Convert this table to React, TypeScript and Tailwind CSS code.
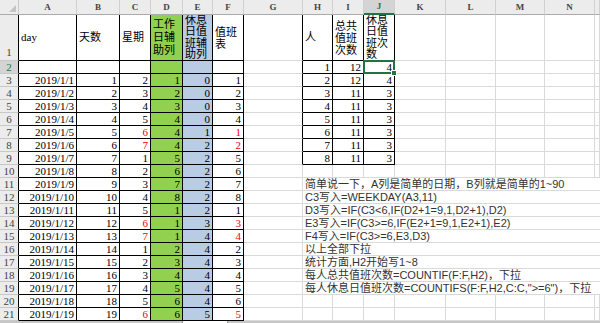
import React from 'react';

const COLS = ['A', 'B', 'C', 'D', 'E', 'F', 'G', 'H', 'I', 'J', 'K', 'L', 'M', 'N', 'O'];

// day, 天数, 星期, 工作日辅助列, 休息日值班辅助列, 值班表
const days: [string, number, number, number, number, number][] = [
  ['2019/1/1', 1, 2, 1, 0, 1],
  ['2019/1/2', 2, 3, 2, 0, 2],
  ['2019/1/3', 3, 4, 3, 0, 3],
  ['2019/1/4', 4, 5, 4, 0, 4],
  ['2019/1/5', 5, 6, 4, 1, 1],
  ['2019/1/6', 6, 7, 4, 2, 2],
  ['2019/1/7', 7, 1, 5, 2, 5],
  ['2019/1/8', 8, 2, 6, 2, 6],
  ['2019/1/9', 9, 3, 7, 2, 7],
  ['2019/1/10', 10, 4, 8, 2, 8],
  ['2019/1/11', 11, 5, 1, 2, 1],
  ['2019/1/12', 12, 6, 1, 3, 3],
  ['2019/1/13', 13, 7, 1, 4, 4],
  ['2019/1/14', 14, 1, 2, 4, 2],
  ['2019/1/15', 15, 2, 3, 4, 3],
  ['2019/1/16', 16, 3, 4, 4, 4],
  ['2019/1/17', 17, 4, 5, 4, 5],
  ['2019/1/18', 18, 5, 6, 4, 6],
  ['2019/1/19', 19, 6, 6, 5, 5],
];

const stats: [number, number, number][] = [
  [1, 12, 4],
  [2, 12, 4],
  [3, 11, 3],
  [4, 11, 3],
  [5, 11, 3],
  [6, 11, 3],
  [7, 11, 3],
  [8, 11, 3],
];

// rows 11..19, overflowing from column H
const notes = [
  '简单说一下，A列是简单的日期，B列就是简单的1~90',
  'C3写入=WEEKDAY(A3,11)',
  'D3写入=IF(C3<6,IF(D2+1=9,1,D2+1),D2)',
  'E3写入=IF(C3>=6,IF(E2+1=9,1,E2+1),E2)',
  'F4写入=IF(C3>=6,E3,D3)',
  '以上全部下拉',
  '统计方面,H2开始写1~8',
  '每人总共值班次数=COUNTIF(F:F,H2)，下拉',
  '每人休息日值班次数=COUNTIFS(F:F,H2,C:C,">=6")，下拉',
];

const gridCell = 'border-r border-b border-[#dadada]';
const blackCell = 'border-r border-b border-black';
const num = 'flex items-center justify-end pr-[2px]';

const RowHead: React.FC<{ n: number }> = ({ n }) => {
  const active = n === 2;
  return (
    <div
      className={`flex justify-center border-b border-b-[#c8c8c8] border-r border-r-black ${
        n === 1 ? 'items-end pb-[1px]' : 'items-center'
      } ${active ? 'bg-[#d4d4d4] text-[#217346]' : 'bg-[#ececec] text-[#444]'}`}
    >
      {n}
    </div>
  );
};

const App: React.FC = () => {
  const cells: React.ReactNode[] = [];

  // column header row
  cells.push(
    <div key="corner" className="flex items-end justify-end bg-[#ececec] border-r border-b border-r-[#c8c8c8] border-b-[#ababab] p-[2px]">
      <svg width="7" height="7" viewBox="0 0 7 7">
        <polygon points="7,0 7,7 0,7" fill="#c4c4c4" />
      </svg>
    </div>
  );
  COLS.forEach((c) => {
    const sel = c === 'J';
    cells.push(
      <div
        key={`h-${c}`}
        className={`flex items-center justify-center text-[9px] font-bold border-r border-r-[#d0d0d0] ${
          sel ? 'bg-[#d4d4d4] text-[#217346] border-b-2 border-b-[#217346]' : 'bg-[#ececec] text-[#444] border-b border-b-[#ababab]'
        }`}
      >
        {c === 'O' ? '' : c}
      </div>
    );
  });

  // row 1: titles
  cells.push(<RowHead key="r1" n={1} />);
  cells.push(<div key="A1" className={`${blackCell} flex items-center pl-[2px]`}>day</div>);
  cells.push(<div key="B1" className={`${blackCell} flex items-center pl-[2px]`}>天数</div>);
  cells.push(<div key="C1" className={`${blackCell} flex items-center pl-[2px]`}>星期</div>);
  cells.push(
    <div key="D1" className={`${blackCell} bg-[#92d050] flex items-center pl-[2px] leading-[13px] overflow-hidden`}>
      工作日辅助列
    </div>
  );
  cells.push(
    <div key="E1" className={`${blackCell} bg-[#b8cce4] flex items-center pl-[2px] leading-[11.5px] overflow-hidden`}>
      休息日值班辅助列
    </div>
  );
  cells.push(
    <div key="F1" className={`${blackCell} flex items-center pl-[2px] leading-[12px] overflow-hidden`}>
      值班表
    </div>
  );
  cells.push(<div key="G1" className="border-r border-b border-r-black border-b-[#dadada]" />);
  cells.push(<div key="H1" className={`${blackCell} flex items-center pl-[2px]`}>人</div>);
  cells.push(
    <div key="I1" className={`${blackCell} flex items-center pl-[2px] leading-[12px] overflow-hidden`}>
      总共值班次数
    </div>
  );
  cells.push(
    <div key="J1" className={`${blackCell} flex items-center pl-[2px] leading-[11.5px] overflow-hidden`}>
      休息日值班次数
    </div>
  );
  ['K', 'L', 'M', 'N', 'O'].forEach((c) => cells.push(<div key={`${c}1`} className={gridCell} />));

  // rows 2..21
  for (let r = 2; r <= 21; r++) {
    const d = r >= 3 ? days[r - 3] : null;
    const s = r <= 9 ? stats[r - 2] : null;
    const red = d && d[2] >= 6;
    cells.push(<RowHead key={`r${r}`} n={r} />);
    cells.push(<div key={`A${r}`} className={`${blackCell} ${num}`}>{d?.[0]}</div>);
    cells.push(<div key={`B${r}`} className={`${blackCell} ${num}`}>{d?.[1]}</div>);
    cells.push(
      <div key={`C${r}`} className={`${blackCell} ${num} ${red ? 'text-[#ff0000]' : ''}`}>
        {d?.[2]}
      </div>
    );
    cells.push(<div key={`D${r}`} className={`${blackCell} ${num} bg-[#92d050]`}>{d?.[3]}</div>);
    cells.push(<div key={`E${r}`} className={`${blackCell} ${num} bg-[#b8cce4]`}>{d?.[4]}</div>);
    cells.push(
      <div key={`F${r}`} className={`${blackCell} ${num} ${red ? 'text-[#ff0000]' : ''}`}>
        {d?.[5]}
      </div>
    );
    cells.push(
      <div
        key={`G${r}`}
        className={r <= 9 ? 'border-r border-b border-r-black border-b-[#dadada]' : gridCell}
      />
    );

    if (s) {
      cells.push(<div key={`H${r}`} className={`${blackCell} ${num}`}>{s[0]}</div>);
      cells.push(<div key={`I${r}`} className={`${blackCell} ${num}`}>{s[1]}</div>);
      cells.push(
        <div key={`J${r}`} className={`${blackCell} ${num} relative`}>
          {s[2]}
          {r === 2 && (
            <div className="absolute -left-px -top-px -right-px -bottom-px border-2 border-[#217346] z-10">
              <div className="absolute -right-[4px] -bottom-[4px] w-[6px] h-[6px] bg-[#217346] border border-white" />
            </div>
          )}
        </div>
      );
      ['K', 'L', 'M', 'N', 'O'].forEach((c) => cells.push(<div key={`${c}${r}`} className={gridCell} />));
    } else if (r >= 11 && r <= 19) {
      cells.push(
        <div
          key={`H${r}`}
          className="col-span-8 border-b border-[#dadada] flex items-center pl-[2px] whitespace-nowrap text-[#333] text-[11px] font-['Liberation_Sans','Noto_Sans_CJK_SC',sans-serif]"
        >
          {notes[r - 11]}
        </div>
      );
    } else {
      ['H', 'I', 'J', 'K', 'L', 'M', 'N', 'O'].forEach((c) =>
        cells.push(<div key={`${c}${r}`} className={gridCell} />)
      );
    }
  }

  return (
    <div className="w-[600px] h-[323px] overflow-hidden bg-white text-black text-[11px] leading-[13px] font-['Liberation_Serif','Noto_Sans_CJK_SC',serif]">
      <div className="grid grid-cols-[19px_58px_43px_31px_32px_30px_31px_59px_30px_31px_31px_51px_50px_49px_50px_1fr] grid-rows-[15px_46px_repeat(20,13px)]">
        {cells}
      </div>
      <div className="flex h-[2px] bg-[#c6c6c6]">
        <div className="ml-[182px] w-[46px] bg-white border-x border-[#9a9a9a]" />
      </div>
    </div>
  );
};

export default App;
